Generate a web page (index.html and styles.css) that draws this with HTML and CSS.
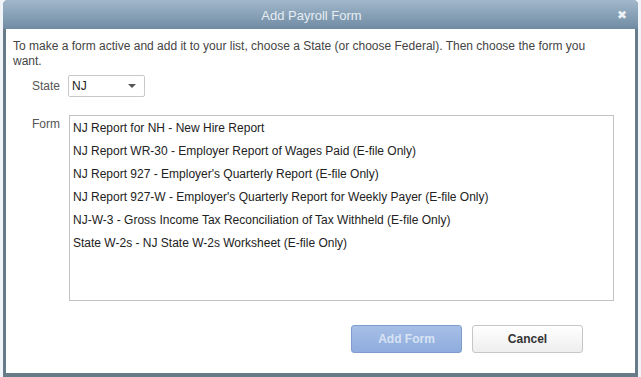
FILE: index.html
```html
<!DOCTYPE html>
<html>
<head>
<meta charset="utf-8">
<link rel="stylesheet" href="styles.css">
</head>
<body>
<div class="dialog">
  <div class="titlebar">
    <span class="title">Add Payroll Form</span>
    <span class="close">&#x2716;</span>
  </div>
  <div class="content">
    <p class="intro">To make a form active and add it to your list, choose a State (or choose Federal). Then choose the form you want.</p>
    <div class="row state-row">
      <span class="label">State</span>
      <div class="select"><span>NJ</span><span class="caret"></span></div>
    </div>
    <div class="row form-row">
      <span class="label">Form</span>
      <ul class="list">
        <li>NJ Report for NH - New Hire Report</li>
        <li>NJ Report WR-30 - Employer Report of Wages Paid (E-file Only)</li>
        <li>NJ Report 927 - Employer's Quarterly Report (E-file Only)</li>
        <li>NJ Report 927-W - Employer's Quarterly Report for Weekly Payer (E-file Only)</li>
        <li>NJ-W-3 - Gross Income Tax Reconciliation of Tax Withheld (E-file Only)</li>
        <li>State W-2s - NJ State W-2s Worksheet (E-file Only)</li>
      </ul>
    </div>
    <div class="buttons">
      <button class="btn primary" disabled>Add Form</button>
      <button class="btn secondary">Cancel</button>
    </div>
  </div>
</div>
</body>
</html>
```
FILE: styles.css
```css
html, body {
  margin: 0;
  padding: 0;
}
body {
  width: 641px;
  height: 377px;
  overflow: hidden;
  background: #f1f4f8;
  font-family: "Liberation Sans", Arial, sans-serif;
  font-size: 12px;
  color: #333;
}
.dialog {
  margin-left: 3px;
  width: 629px;
  height: 373px;
  border: 3px solid #687b88;
  border-top: none;
  border-bottom-width: 4px;
  border-radius: 5px 5px 0 0;
  background: #fff;
  display: flex;
  flex-direction: column;
}
.titlebar {
  height: 29px;
  margin: 0 -3px;
  border-radius: 5px 5px 0 0;
  background: linear-gradient(#a2b8cb, #6f8ba3);
  position: relative;
  display: flex;
  align-items: center;
  justify-content: center;
}
.title {
  color: #e6edf3;
  font-size: 13px;
  padding-top: 1px;
  padding-right: 18px;
}
.close {
  position: absolute;
  right: 11px;
  top: 8px;
  color: #eef2f6;
  font-size: 12px;
  font-family: "DejaVu Sans", sans-serif;
  font-weight: bold;
}
.content {
  flex: 1;
  padding: 10px 0 0 7px;
  display: flex;
  flex-direction: column;
}
.intro {
  margin: 0;
  line-height: 15px;
  color: #444;
  width: 600px;
}
.row {
  display: flex;
  align-items: flex-start;
}
.label {
  width: 47px;
  text-align: right;
  color: #555;
  margin-right: 8px;
}
.state-row {
  margin-top: 6px;
  align-items: center;
}
.select {
  width: 72px;
  height: 20px;
  border: 1px solid #c9c9c9;
  border-radius: 2px;
  display: flex;
  align-items: center;
  justify-content: space-between;
  padding-left: 3px;
  box-sizing: content-box;
  color: #222;
}
.caret {
  width: 0;
  height: 0;
  border-left: 4px solid transparent;
  border-right: 4px solid transparent;
  border-top: 4px solid #555;
  margin-right: 8px;
}
.form-row {
  margin-top: 18px;
}
.form-row .label {
  margin-top: 2px;
  margin-right: 9px;
}
.list {
  margin: 0;
  padding: 1px 0 0 3px;
  list-style: none;
  width: 540px;
  height: 183px;
  border: 1px solid #c2c2c2;
}
.list li {
  line-height: 23px;
  color: #222;
}
.buttons {
  display: flex;
  justify-content: flex-end;
  gap: 10px;
  margin-top: 24px;
  padding-right: 52px;
}
.btn {
  width: 111px;
  height: 28px;
  border-radius: 3px;
  font-family: "Liberation Sans", Arial, sans-serif;
  font-size: 12px;
  font-weight: bold;
}
.primary {
  background: linear-gradient(#a7bfe6, #8eacdd);
  border: 1px solid #7e9dcd;
  color: #d8e3f4;
}
.secondary {
  background: linear-gradient(#ffffff, #eeeeee);
  border: 1px solid #c6c6c6;
  color: #333;
}
```
